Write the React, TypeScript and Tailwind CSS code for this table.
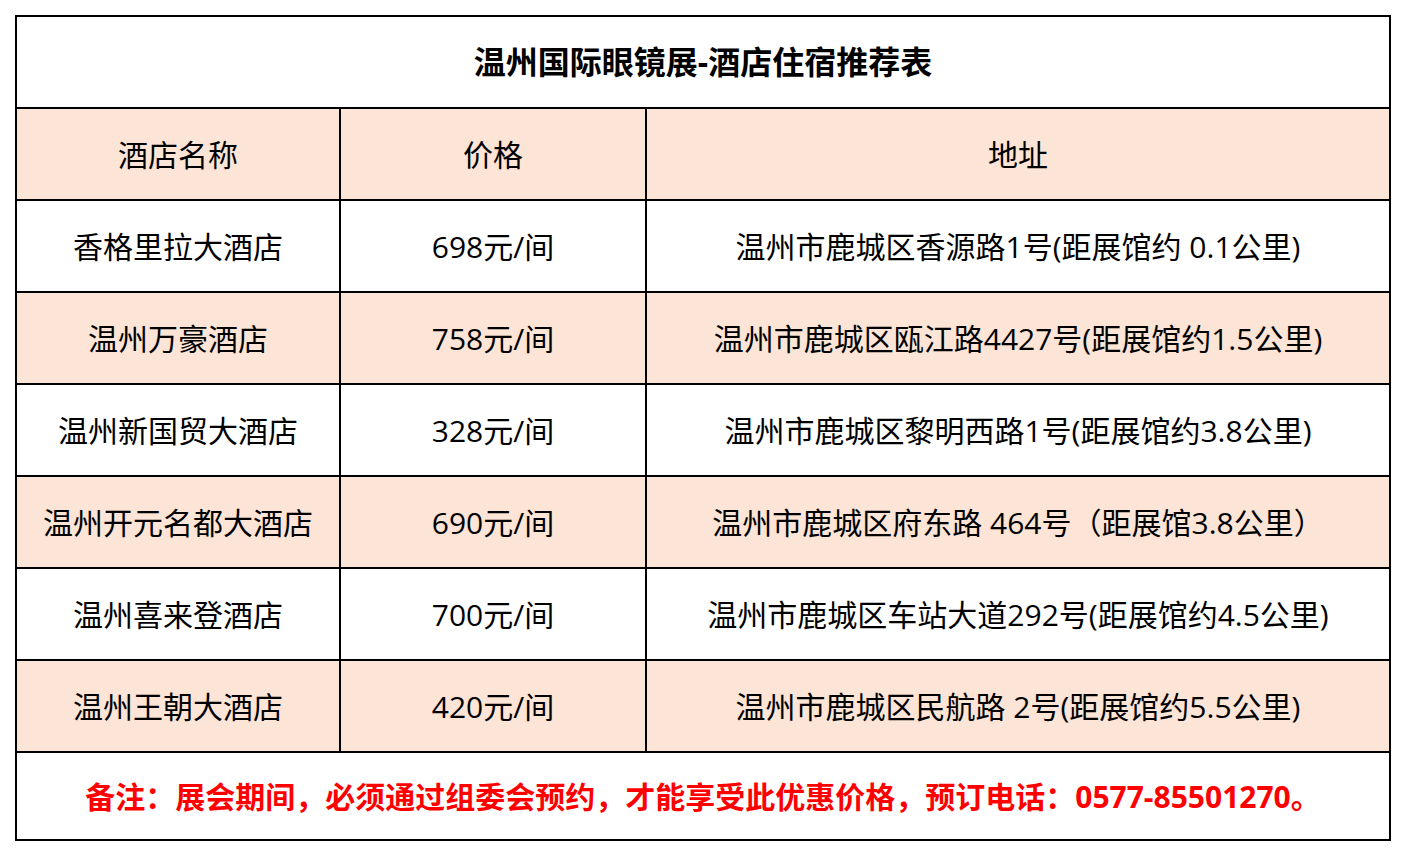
const rows = [
  { name: '香格里拉大酒店', price: '698元/间', addr: '温州市鹿城区香源路1号(距展馆约 0.1公里)' },
  { name: '温州万豪酒店', price: '758元/间', addr: '温州市鹿城区瓯江路4427号(距展馆约1.5公里)' },
  { name: '温州新国贸大酒店', price: '328元/间', addr: '温州市鹿城区黎明西路1号(距展馆约3.8公里)' },
  { name: '温州开元名都大酒店', price: '690元/间', addr: '温州市鹿城区府东路 464号（距展馆3.8公里）' },
  { name: '温州喜来登酒店', price: '700元/间', addr: '温州市鹿城区车站大道292号(距展馆约4.5公里)' },
  { name: '温州王朝大酒店', price: '420元/间', addr: '温州市鹿城区民航路 2号(距展馆约5.5公里)' },
];

const font = "font-['Open_Sans','Noto_Sans_CJK_SC',sans-serif]";

export default function App() {
  return (
    <div className={`w-[1406px] h-[856px] bg-white text-black ${font}`}>
      <div className="pt-[15px] pl-[15px]">
        <div className="w-[1376px] grid grid-cols-[322px_304px_742px] gap-[2px] p-[2px] bg-black">
          <div className="col-span-3 h-[90px] bg-white flex items-center justify-center text-[32px] font-bold">
            温州国际眼镜展-酒店住宿推荐表
          </div>

          {/* 表头 */}
          <div className="h-[90px] bg-[#fce4d6] flex items-center justify-center text-[30px]">酒店名称</div>
          <div className="h-[90px] bg-[#fce4d6] flex items-center justify-center text-[30px]">价格</div>
          <div className="h-[90px] bg-[#fce4d6] flex items-center justify-center text-[30px]">地址</div>

          {rows.map((r, i) => {
            const bg = i % 2 === 1 ? 'bg-[#fce4d6]' : 'bg-white';
            return [
              <div key={r.name + 'n'} className={`h-[90px] ${bg} flex items-center justify-center text-[30px] whitespace-nowrap`}>
                {r.name}
              </div>,
              <div key={r.name + 'p'} className={`h-[90px] ${bg} flex items-center justify-center text-[30px] whitespace-nowrap`}>
                {r.price}
              </div>,
              <div key={r.name + 'a'} className={`h-[90px] ${bg} flex items-center justify-center text-[30px] whitespace-nowrap`}>
                {r.addr}
              </div>,
            ];
          })}

          {/* 备注 */}
          <div className="col-span-3 h-[86px] bg-white flex items-center justify-center text-[30px] font-bold text-[#ff0000] whitespace-nowrap">
            备注：展会期间，必须通过组委会预约，才能享受此优惠价格，预订电话：0577-85501270。
          </div>
        </div>
      </div>
    </div>
  );
}
